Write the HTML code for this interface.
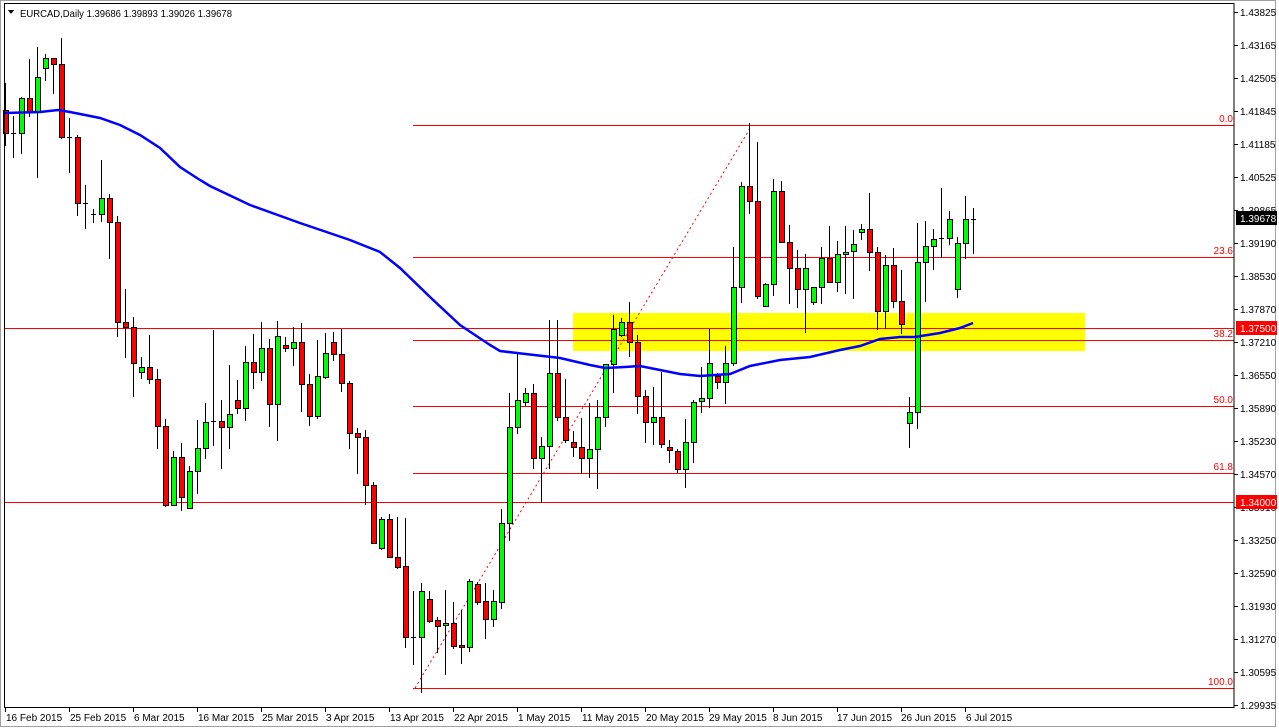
<!DOCTYPE html>
<html><head><meta charset="utf-8"><style>
html,body{margin:0;padding:0;background:#fff;width:1279px;height:728px;overflow:hidden}
svg{display:block}
text{font-family:"Liberation Sans","DejaVu Sans",sans-serif;font-size:10px}
</style></head><body>
<svg id="s" width="1279" height="728" xmlns="http://www.w3.org/2000/svg" shape-rendering="crispEdges">
<rect x="0" y="0" width="1279" height="728" fill="#fff"/>
<rect x="0.5" y="0.5" width="1275" height="726" fill="none" stroke="#a0a0a0"/>
<rect x="573" y="313" width="512" height="38" fill="#ffff00"/>
<g stroke="#ff0000" stroke-width="1">
<line x1="4" y1="328.5" x2="1234" y2="328.5"/>
<line x1="4" y1="502.5" x2="1234" y2="502.5"/>
<line x1="413" y1="125.5" x2="1234" y2="125.5"/>
<line x1="413" y1="257.5" x2="1234" y2="257.5"/>
<line x1="413" y1="340.5" x2="1234" y2="340.5"/>
<line x1="413" y1="406.5" x2="1234" y2="406.5"/>
<line x1="413" y1="473.5" x2="1234" y2="473.5"/>
<line x1="413" y1="688.5" x2="1234" y2="688.5"/>
</g>
<line x1="415" y1="688" x2="752" y2="125" stroke="#ff0000" stroke-width="1" stroke-dasharray="2,3" shape-rendering="auto"/>
<g fill="#ff0000" text-anchor="end">
<text x="1233" y="122">0.0</text>
<text x="1233" y="254">23.6</text>
<text x="1233" y="337">38.2</text>
<text x="1233" y="403">50.0</text>
<text x="1233" y="470">61.8</text>
<text x="1233" y="685">100.0</text>
</g>
<g id="c"></g>
<polyline fill="none" stroke="#0000ff" stroke-width="2.5" shape-rendering="auto" points="5,113 40,112 58,110 70,112 100,118 120,125 140,135 160,148 180,167 200,180 210,186 250,205 300,223 350,240 380,252 400,268 430,297 460,325 490,345 500,351 517,353 560,358 590,365 605,368 625,367 640,366 660,370 680,374 700,376 730,374 750,366 780,360 810,357 840,350 860,346 880,339 900,337 915,337 940,333 960,328 973,323"/>
<rect x="4.5" y="3.5" width="1229.5" height="704" fill="none" stroke="#000"/>
<g stroke="#000" id="ticks"></g>
<path d="M8,10 L14,10 L11,14 Z" fill="#000"/>
<text x="20" y="17" fill="#000" textLength="212" lengthAdjust="spacingAndGlyphs">EURCAD,Daily  1.39686 1.39893 1.39026 1.39678</text>
<g fill="#000" id="pl">
<text x="1240" y="16">1.43825</text><text x="1240" y="49">1.43165</text><text x="1240" y="82">1.42505</text>
<text x="1240" y="115">1.41845</text><text x="1240" y="148">1.41185</text><text x="1240" y="181">1.40525</text>
<text x="1240" y="214">1.39865</text><text x="1240" y="247">1.39190</text><text x="1240" y="280">1.38530</text>
<text x="1240" y="313">1.37870</text><text x="1240" y="346">1.37210</text><text x="1240" y="379">1.36550</text>
<text x="1240" y="412">1.35890</text><text x="1240" y="445">1.35230</text><text x="1240" y="478">1.34570</text>
<text x="1240" y="511">1.33910</text><text x="1240" y="544">1.33250</text><text x="1240" y="577">1.32590</text>
<text x="1240" y="610">1.31930</text><text x="1240" y="643">1.31270</text><text x="1240" y="676">1.30595</text>
<text x="1240" y="709">1.29935</text>
</g>
<rect x="1236" y="211" width="41" height="14" fill="#000"/>
<text x="1240" y="222" fill="#fff">1.39678</text>
<rect x="1236" y="321" width="41" height="14" fill="#ff0000"/>
<text x="1240" y="332" fill="#fff">1.37500</text>
<rect x="1236" y="495" width="41" height="14" fill="#ff0000"/>
<text x="1240" y="506" fill="#fff">1.34000</text>
<g fill="#000">
<text x="6" y="721">16 Feb 2015</text><text x="70" y="721">25 Feb 2015</text><text x="134" y="721">6 Mar 2015</text>
<text x="198" y="721">16 Mar 2015</text><text x="262" y="721">25 Mar 2015</text><text x="326" y="721">3 Apr 2015</text>
<text x="390" y="721">13 Apr 2015</text><text x="454" y="721">22 Apr 2015</text><text x="518" y="721">1 May 2015</text>
<text x="582" y="721">11 May 2015</text><text x="646" y="721">20 May 2015</text><text x="709" y="721">29 May 2015</text>
<text x="773" y="721">8 Jun 2015</text><text x="837" y="721">17 Jun 2015</text><text x="901" y="721">26 Jun 2015</text>
<text x="966" y="721">6 Jul 2015</text>
</g>
</svg>
<script>
var D=[[110,133,83,145],[133,133,116,157],[133,98,97,153],[98,112,59,116],[112,77,47,177],[68,58,54,80],[58,64,58,93],[64,137,38,138],[137,137,118,172],[137,203,135,215],[203,203,185,228],[214,214,209,222],[214,198,160,221],[198,222,194,258],[222,322,216,336],[322,327,289,357],[327,363,317,396],[372,367,357,378],[367,379,335,383],[379,426,369,448],[426,505,419,506],[505,457,451,505],[457,497,443,510],[508,471,466,508],[471,448,420,493],[448,422,403,458],[421,421,330,445],[421,427,400,468],[427,414,365,448],[400,408,380,413],[408,362,346,420],[362,372,334,388],[372,348,322,380],[348,404,339,426],[404,336,321,440],[345,348,337,351],[348,342,327,365],[342,384,323,411],[384,416,374,425],[416,376,340,418],[377,353,333,378],[342,354,332,360],[354,383,329,391],[383,433,381,448],[433,437,428,473],[437,485,430,504],[485,543,482,543],[548,519,517,549],[519,557,514,557],[557,567,517,568],[566,637,518,647],[637,637,591,664],[637,591,583,692],[599,621,591,622],[620,626,617,652],[625,623,590,674],[623,646,602,648],[645,647,610,663],[647,581,579,651],[584,602,582,604],[601,619,583,638],[619,601,590,626],[602,523,509,608],[523,427,393,540],[427,400,352,433],[402,393,388,405],[393,458,384,468],[458,446,437,502],[446,373,320,468],[373,417,320,420],[417,440,379,442],[442,447,431,456],[447,458,418,473],[458,449,403,477],[449,417,400,488],[417,364,364,426],[364,329,315,392],[335,322,318,336],[322,342,302,356],[342,396,335,413],[396,422,390,442],[422,417,387,444],[417,444,372,447],[447,450,440,462],[451,469,449,472],[469,442,419,487],[442,402,400,462],[401,398,367,412],[398,363,329,407],[376,382,373,388],[382,363,346,403],[363,287,247,365],[287,186,182,302],[186,201,123,213],[201,296,142,298],[306,284,283,306],[284,191,179,295],[191,242,181,242],[242,268,225,303],[268,289,250,307],[289,268,254,332],[302,287,287,304],[287,258,247,303],[258,282,226,282],[282,254,241,291],[254,252,226,293],[251,244,230,298],[232,229,224,239],[229,252,193,270],[252,311,247,329],[311,265,255,328],[265,301,248,307],[301,324,270,333],[423,412,397,447],[412,262,223,428],[262,246,221,301],[246,239,229,269],[238,238,188,257],[238,219,211,244],[289,243,237,297],[243,219,196,258],[219,219,208,253]];
var NS="http://www.w3.org/2000/svg",g=document.getElementById("c");
function el(t,a){var e=document.createElementNS(NS,t);for(var k in a)e.setAttribute(k,a[k]);g.appendChild(e);}
D.forEach(function(d,i){var x=5+8*i,o=d[0],c=d[1],h=d[2],l=d[3];
el("line",{x1:x+.5,y1:h,x2:x+.5,y2:l+1,stroke:"#000"});
if(o==c){el("line",{x1:x-2,y1:o+.5,x2:x+3,y2:o+.5,stroke:"#000"});}
else{var t=Math.min(o,c),b=Math.max(o,c);el("rect",{x:x-2+.5,y:t+.5,width:5,height:Math.max(1,b-t),fill:c<o?"#00ff00":"#ff0000",stroke:"#000"});}
});
var tk=document.getElementById("ticks");
for(var y=12;y<=705;y+=33){var e=document.createElementNS(NS,"line");e.setAttribute("x1",1234);e.setAttribute("x2",1238);e.setAttribute("y1",y+.5);e.setAttribute("y2",y+.5);tk.appendChild(e);}
for(var x=5;x<1000;x+=64){var e=document.createElementNS(NS,"line");e.setAttribute("x1",x+.5);e.setAttribute("x2",x+.5);e.setAttribute("y1",708);e.setAttribute("y2",712);tk.appendChild(e);}
</script>
</body></html>
